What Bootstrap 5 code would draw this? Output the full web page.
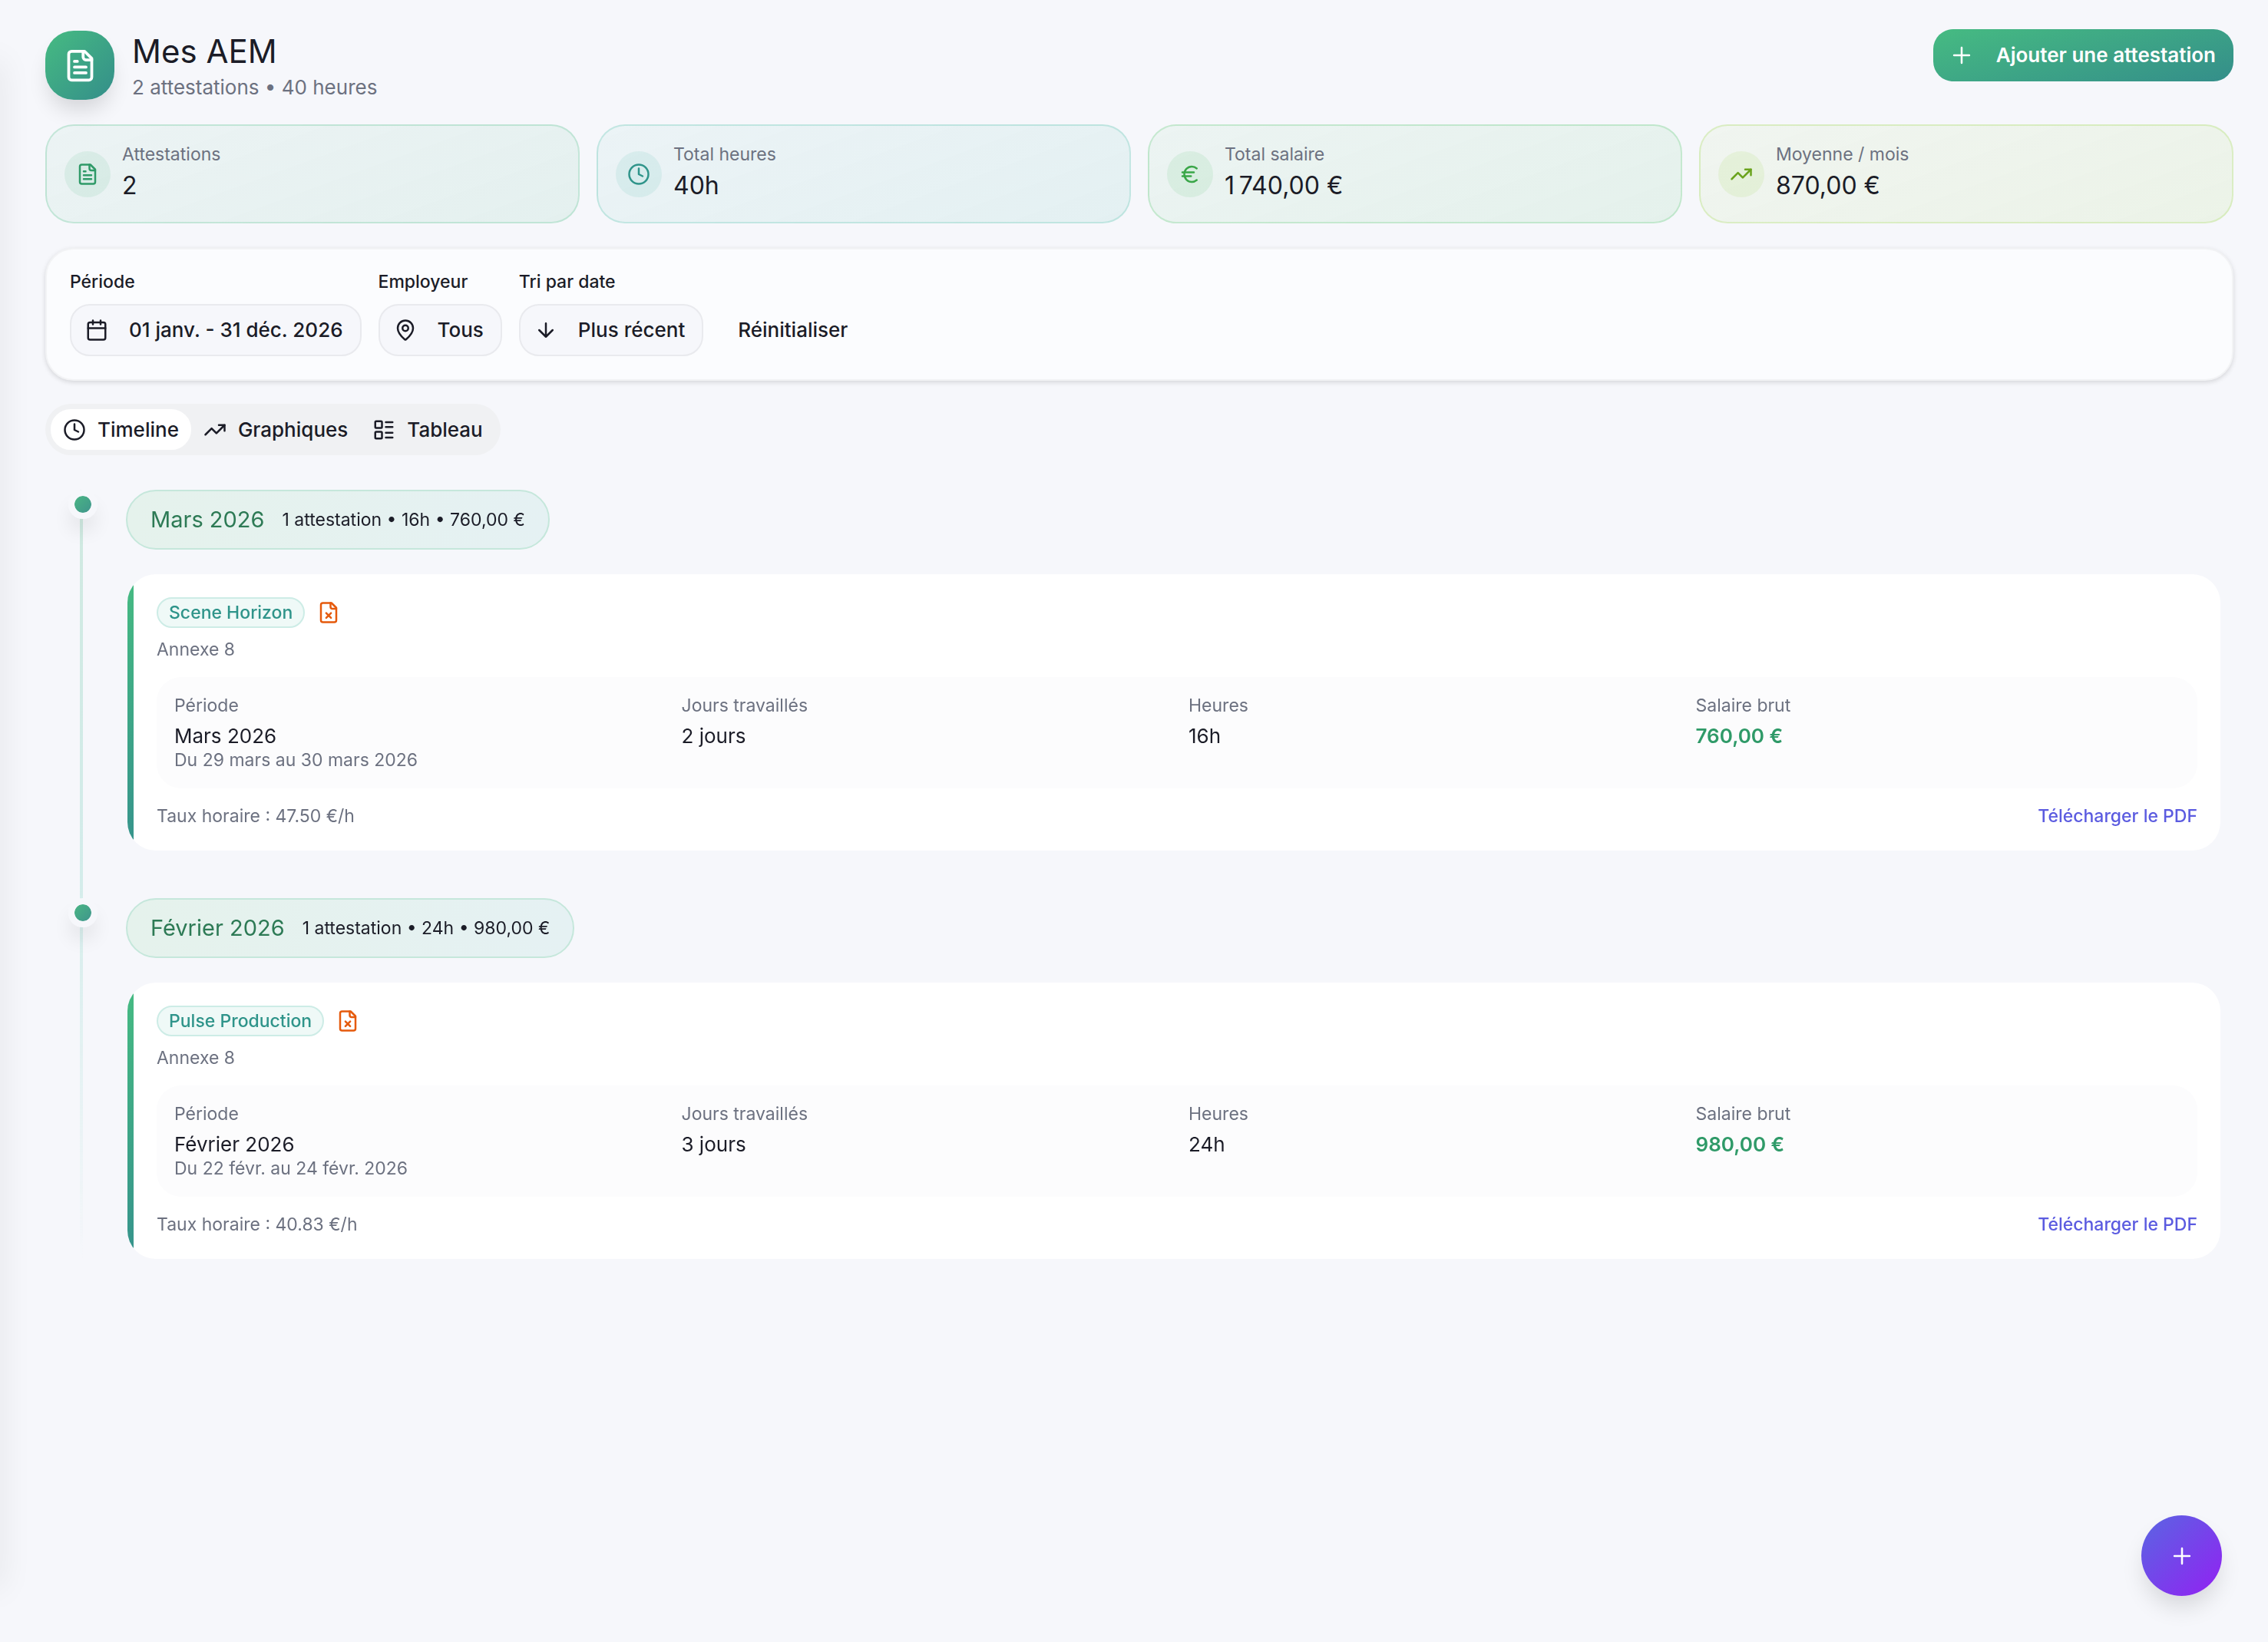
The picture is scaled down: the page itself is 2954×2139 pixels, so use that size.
<!DOCTYPE html>
<html lang="fr">
<head>
<meta charset="utf-8">
<meta name="viewport" content="width=device-width, initial-scale=1">
<title>Mes AEM</title>
<link href="https://cdn.jsdelivr.net/npm/bootstrap@5.3.0/dist/css/bootstrap.min.css" rel="stylesheet">
<style>
:root{--ink:#1b1c27;--soft:#6c7180;--page:#f6f7fb}
body{background:var(--page);color:var(--ink);font-family:Inter,"Noto Sans",sans-serif;font-size:26px;line-height:38px;min-height:100vh}
body::before{content:"";position:fixed;left:-20px;top:80px;bottom:70px;width:20px;box-shadow:0 0 40px rgba(0,0,0,.1)}
svg{fill:none;stroke:currentColor;stroke-width:2;stroke-linecap:round;stroke-linejoin:round;flex:none}
.ic30{width:30px;height:30px}
.page{padding:38px 45px 60px 59px}
.t-sm{font-size:23px;line-height:30px}
.soft{color:var(--soft)}
.logo{width:90px;height:90px;border-radius:37px;color:#fff;background:linear-gradient(135deg,#46bb82,#348e8a);box-shadow:0 18px 28px -6px rgba(0,0,0,.14)}
.logo svg{width:45px;height:45px}
.head{gap:23px}
.head h1{font-size:42px;line-height:58px;font-weight:400}
.head p{line-height:36px}
.btn{font-size:26px;font-weight:500;line-height:38px;color:var(--ink);border-radius:26px;height:68px;border:2px solid transparent;display:flex;align-items:center}
.btn-add{background:linear-gradient(165deg,#46bb82,#348e8a);color:#fff;font-weight:600;padding:0 23px 0 20px;gap:28px;border:0}
.btn-add:hover{color:#fff}
.btn-add svg,.fab svg{width:34px;height:34px;stroke-width:1.8}
.stats{display:grid;grid-template-columns:repeat(4,1fr);gap:22px;margin-top:30px}
.stat{display:flex;align-items:center;gap:15px;padding:22px 23px;border:2px solid rgba(var(--c),.22);border-radius:37px;background:linear-gradient(160deg,rgba(var(--c),.05),rgba(var(--c),.09))}
.stat .disc{width:60px;height:60px;border-radius:50%;background:rgba(var(--c),.1);color:var(--i)}
.stat dt{font-weight:400;line-height:31px}
.stat dd{font-size:32px;line-height:50px;margin:0}
.s1{--c:56,180,120;--i:#2f9a68}
.s2{--c:49,180,155;--i:#2f948a}
.s3{--c:60,190,85;--i:#3aa648}
.s4{--c:140,210,40;--i:#6aa31c}
.filters{margin-top:32px;padding:30px;border:2px solid #f2f3f5;border-radius:37px;background:#fbfcfe;box-shadow:0 2px 6px rgba(0,0,0,.14);gap:22px}
.filters label{font-size:23px;line-height:24px;font-weight:500;margin-bottom:17px;display:block}
.btn-filter{background:#f6f7fb;border-color:#e9eaee;padding:0 22px 0 18px;gap:27px}
.btn-reset{padding:0 21px}
.tabs{margin-top:30px;padding:7px;background:#f0f1f3;border-radius:34px;width:fit-content}
.tabs .btn{height:53px;gap:15px;padding:0 14px}
.tabs .btn.active{background:#fff;color:var(--ink);border-color:#fff}
.timeline{position:relative;margin-top:45px;padding:0 17px 0 105px}
.timeline::before{content:"";position:absolute;left:45px;top:0;bottom:0;width:4px;background:linear-gradient(#cfe9e0,#d3ecea 50%,rgba(211,236,234,0))}
.month{position:relative}
.month+.month{margin-top:62px}
.knot{position:absolute;left:-75px;top:0;width:38px;height:38px;border:8px solid var(--page);border-radius:50%;background:linear-gradient(135deg,#4ab584,#3f958c) padding-box;box-shadow:0 18px 28px -6px rgba(0,0,0,.14)}
.pill{width:fit-content;height:78px;padding:0 30px;gap:23px;border:2px solid #c5e7db;border-radius:39px;background:linear-gradient(90deg,#e5f2ec,#e5f1f3)}
.pill h2{font-size:29px;line-height:38px;font-weight:400;color:#2d7a55;margin:0}
.aem{position:relative;margin:32px 0 0 2px;padding:30px 30px 30px 38px;background:#fff;border-radius:37px;overflow:hidden}
.aem::before{content:"";position:absolute;left:0;top:0;bottom:0;width:8px;background:linear-gradient(#46bb82,#36938c)}
.tag{height:40px;padding:0 14px;border:2px solid #cdece6;border-radius:20px;background:#eff9f7;color:#2f948a;font-weight:500;line-height:36px}
.warn{color:#e55a0c}
.annex{margin:13px 0 21px}
.facts{display:grid;grid-template-columns:repeat(4,1fr);column-gap:30px;background:#fcfcfd;border-radius:32px;padding:23px;margin:0}
.facts dt{font-weight:400;line-height:28px}
.facts dd{margin:9px 0 0;line-height:34px}
.facts dd+dd{margin:0;line-height:28px}
.facts .pay{color:#2f9a68;font-weight:600}
.foot{margin-top:21px}
.foot a{color:#5b5be0;font-weight:500;text-decoration:none}
.fab{position:fixed;right:60px;bottom:60px;width:105px;height:105px;border:0;border-radius:50%;color:#fff;background:linear-gradient(135deg,#5f5fe4 10%,#8a2bf0 85%);box-shadow:0 18px 30px -4px rgba(0,0,0,.13)}
</style>
</head>
<body>
<svg class="d-none" aria-hidden="true">
  <symbol id="i-file" viewBox="0 0 24 24"><path d="M15 2H6a2 2 0 0 0-2 2v16a2 2 0 0 0 2 2h12a2 2 0 0 0 2-2V7Z"/><path d="M14 2v4a2 2 0 0 0 2 2h4M10 9H8M16 13H8M16 17H8"/></symbol>
  <symbol id="i-filex" viewBox="0 0 24 24"><path d="M15 2H6a2 2 0 0 0-2 2v16a2 2 0 0 0 2 2h12a2 2 0 0 0 2-2V7Z"/><path d="M14 2v4a2 2 0 0 0 2 2h4M14.500 12.500l-5 5M9.500 12.500l5 5"/></symbol>
  <symbol id="i-clock" viewBox="0 0 24 24"><circle cx="12" cy="12" r="10"/><path d="M12 6v6l4 2"/></symbol>
  <symbol id="i-euro" viewBox="0 0 24 24"><path d="M4 10h12M4 14h9M19 6a7.700 7.700 0 0 0-5.200-2A7.900 7.900 0 0 0 6 12c0 4.400 3.500 8 7.800 8 2 0 3.800-.8 5.200-2"/></symbol>
  <symbol id="i-trend" viewBox="0 0 24 24"><path d="M22 7l-8.500 8.500-5-5L2 17"/><path d="M16 7h6v6"/></symbol>
  <symbol id="i-plus" viewBox="0 0 24 24"><path d="M5 12h14M12 5v14"/></symbol>
  <symbol id="i-cal" viewBox="0 0 24 24"><path d="M8 2v4M16 2v4M3 10h18"/><rect x="3" y="4" width="18" height="18" rx="2"/></symbol>
  <symbol id="i-pin" viewBox="0 0 24 24"><path d="M20 10c0 5-5.500 10.200-7.400 11.800a1 1 0 0 1-1.200 0C9.500 20.200 4 15 4 10a8 8 0 0 1 16 0"/><circle cx="12" cy="10" r="3"/></symbol>
  <symbol id="i-down" viewBox="0 0 24 24"><path d="M12 5v14M19 12l-7 7-7-7"/></symbol>
  <symbol id="i-list" viewBox="0 0 24 24"><rect x="3" y="3" width="7" height="7" rx="1"/><rect x="3" y="14" width="7" height="7" rx="1"/><path d="M14 4h7M14 9h7M14 15h7M14 20h7"/></symbol>
</svg>

<main class="page">
  <header class="d-flex justify-content-between align-items-start">
    <div class="head d-flex align-items-center">
      <div class="logo d-flex align-items-center justify-content-center"><svg><use href="#i-file"/></svg></div>
      <div>
        <h1 class="m-0">Mes AEM</h1>
        <p class="soft m-0">2 attestations • 40 heures</p>
      </div>
    </div>
    <button type="button" class="btn btn-add"><svg><use href="#i-plus"/></svg>Ajouter une attestation</button>
  </header>

  <section class="stats" aria-label="Statistiques">
    <div class="stat s1"><span class="disc d-flex align-items-center justify-content-center"><svg class="ic30"><use href="#i-file"/></svg></span><dl class="m-0"><dt class="t-sm soft">Attestations</dt><dd>2</dd></dl></div>
    <div class="stat s2"><span class="disc d-flex align-items-center justify-content-center"><svg class="ic30"><use href="#i-clock"/></svg></span><dl class="m-0"><dt class="t-sm soft">Total heures</dt><dd>40h</dd></dl></div>
    <div class="stat s3"><span class="disc d-flex align-items-center justify-content-center"><svg class="ic30"><use href="#i-euro"/></svg></span><dl class="m-0"><dt class="t-sm soft">Total salaire</dt><dd>1&#8239;740,00 €</dd></dl></div>
    <div class="stat s4"><span class="disc d-flex align-items-center justify-content-center"><svg class="ic30"><use href="#i-trend"/></svg></span><dl class="m-0"><dt class="t-sm soft">Moyenne / mois</dt><dd>870,00 €</dd></dl></div>
  </section>

  <section class="filters d-flex align-items-end" aria-label="Filtres">
    <div><label for="f-periode">Période</label><button type="button" id="f-periode" class="btn btn-filter"><svg class="ic30"><use href="#i-cal"/></svg>01 janv. - 31 déc. 2026</button></div>
    <div><label for="f-employeur">Employeur</label><button type="button" id="f-employeur" class="btn btn-filter"><svg class="ic30"><use href="#i-pin"/></svg>Tous</button></div>
    <div><label for="f-tri">Tri par date</label><button type="button" id="f-tri" class="btn btn-filter"><svg class="ic30"><use href="#i-down"/></svg>Plus récent</button></div>
    <button type="button" class="btn btn-reset">Réinitialiser</button>
  </section>

  <div class="tabs d-flex" role="tablist">
    <button type="button" class="btn active" role="tab" aria-selected="true"><svg class="ic30"><use href="#i-clock"/></svg>Timeline</button>
    <button type="button" class="btn" role="tab" aria-selected="false"><svg class="ic30"><use href="#i-trend"/></svg>Graphiques</button>
    <button type="button" class="btn" role="tab" aria-selected="false"><svg class="ic30"><use href="#i-list"/></svg>Tableau</button>
  </div>

  <div class="timeline">
    <section class="month">
      <span class="knot"></span>
      <div class="pill d-flex align-items-center"><h2>Mars 2026</h2><span class="t-sm">1 attestation • 16h • 760,00 €</span></div>
      <article class="aem">
        <div class="d-flex align-items-center gap-3"><span class="tag t-sm">Scene Horizon</span><svg class="ic30 warn"><use href="#i-filex"/></svg></div>
        <p class="annex t-sm soft">Annexe 8</p>
        <div class="facts">
          <dl class="m-0"><dt class="t-sm soft">Période</dt><dd>Mars 2026</dd><dd class="t-sm soft">Du 29 mars au 30 mars 2026</dd></dl>
          <dl class="m-0"><dt class="t-sm soft">Jours travaillés</dt><dd>2 jours</dd></dl>
          <dl class="m-0"><dt class="t-sm soft">Heures</dt><dd>16h</dd></dl>
          <dl class="m-0"><dt class="t-sm soft">Salaire brut</dt><dd class="pay">760,00 €</dd></dl>
        </div>
        <div class="foot t-sm d-flex justify-content-between"><span class="soft">Taux horaire : 47.50 €/h</span><a href="#">Télécharger le PDF</a></div>
      </article>
    </section>
    <section class="month">
      <span class="knot"></span>
      <div class="pill d-flex align-items-center"><h2>Février 2026</h2><span class="t-sm">1 attestation • 24h • 980,00 €</span></div>
      <article class="aem">
        <div class="d-flex align-items-center gap-3"><span class="tag t-sm">Pulse Production</span><svg class="ic30 warn"><use href="#i-filex"/></svg></div>
        <p class="annex t-sm soft">Annexe 8</p>
        <div class="facts">
          <dl class="m-0"><dt class="t-sm soft">Période</dt><dd>Février 2026</dd><dd class="t-sm soft">Du 22 févr. au 24 févr. 2026</dd></dl>
          <dl class="m-0"><dt class="t-sm soft">Jours travaillés</dt><dd>3 jours</dd></dl>
          <dl class="m-0"><dt class="t-sm soft">Heures</dt><dd>24h</dd></dl>
          <dl class="m-0"><dt class="t-sm soft">Salaire brut</dt><dd class="pay">980,00 €</dd></dl>
        </div>
        <div class="foot t-sm d-flex justify-content-between"><span class="soft">Taux horaire : 40.83 €/h</span><a href="#">Télécharger le PDF</a></div>
      </article>
    </section>
  </div>
</main>
<button type="button" class="fab d-flex align-items-center justify-content-center" aria-label="Ajouter"><svg><use href="#i-plus"/></svg></button>
<script src="https://cdn.jsdelivr.net/npm/bootstrap@5.3.0/dist/js/bootstrap.bundle.min.js"></script>
</body>
</html>
